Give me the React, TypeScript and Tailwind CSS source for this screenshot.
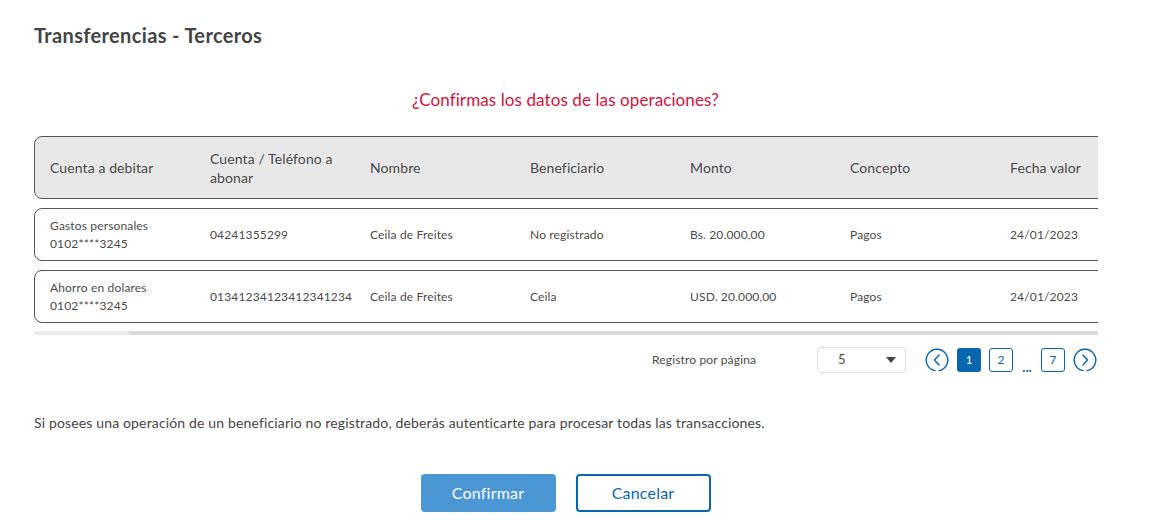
import React from "react";

const cols = ["Cuenta a debitar", "Cuenta / Teléfono a abonar", "Nombre", "Beneficiario", "Monto", "Concepto", "Fecha valor"];

const rows = [
  { a: ["Gastos personales", "0102****3245"], b: "04241355299", c: "Ceila de Freites", d: "No registrado", e: "Bs. 20.000,00", f: "Pagos", g: "24/01/2023" },
  { a: ["Ahorro en dolares", "0102****3245"], b: "01341234123412341234", c: "Ceila de Freites", d: "Ceila", e: "USD. 20.000,00", f: "Pagos", g: "24/01/2023" },
];

function Circle({ dir }: { dir: "l" | "r" }) {
  return (
    <svg width="24" height="24" viewBox="0 0 24 24" fill="none" stroke="#0a64ad" strokeWidth="1.4" strokeLinecap="round" strokeLinejoin="round">
      <path d="M14 22.6 A10.8 10.8 0 1 0 10 22.6" />
      {dir === "l" ? <path d="M14 7 L9.5 12 L14 17" /> : <path d="M10 7 L14.5 12 L10 17" />}
    </svg>
  );
}

export default function App() {
  return (
    <div className="w-[1162px] h-[529px] bg-white overflow-hidden text-[#4a4a4a]" style={{ fontFamily: "Lato, 'Noto Sans', sans-serif" }}>
      <div className="pl-[34px] pt-[23px]">
        <h1 className="text-[20px] font-bold text-[#444] leading-[24px] tracking-[0.35px]">Transferencias - Terceros</h1>
      </div>
      <p className="text-center text-[17px] text-[#d4123e] mt-[43px] leading-[20px] pr-[31px] tracking-[0.1px]">¿Confirmas los datos de las operaciones?</p>
      <div className="ml-[34px] w-[1064px] mt-[26px] overflow-hidden">
        <div className="w-[1200px]">
          <div className="h-[63px] bg-[#e8e8e8] border border-[#555] rounded-[8px] flex items-center text-[14px] text-[#4a4a4a] tracking-[0.1px]">
            {cols.map((c, i) => (
              <div key={i} className="w-[160px] pl-[15px] leading-[19px] pr-[10px] shrink-0">{c}</div>
            ))}
          </div>
          {rows.map((r, i) => (
            <div key={i} className="h-[53px] mt-[9px] border border-[#555] rounded-[8px] flex items-center text-[12px] text-[#4a4a4a] tracking-[0.15px]">
              <div className="w-[160px] pl-[15px] leading-[18px] shrink-0">
                <div>{r.a[0]}</div>
                <div>{r.a[1]}</div>
              </div>
              {[r.b, r.c, r.d, r.e, r.f, r.g].map((v, j) => (
                <div key={j} className="w-[160px] pl-[15px] shrink-0 whitespace-nowrap">{v}</div>
              ))}
            </div>
          ))}
        </div>
        <div className="mt-[8px] h-[4px] bg-[#d9d9d9] flex">
          <div className="w-[95px] h-full bg-[#ececec]" />
        </div>
      </div>
      <div className="flex items-center ml-[652px] mt-[12px] h-[26px]">
        <span className="text-[12px] text-[#4a4a4a] w-[165px] tracking-[0.15px]">Registro por página</span>
        <div className="w-[89px] h-[26px] border border-[#ddd] rounded-[4px] flex items-center justify-between pl-[20px] pr-[9px] text-[13px]">
          <span>5</span>
          <svg width="10" height="6" viewBox="0 0 10 6"><path d="M0 0 H10 L5 6 Z" fill="#444" /></svg>
        </div>
        <div className="ml-[19px] flex items-center gap-[8px]">
          <Circle dir="l" />
          <div className="w-[24px] h-[24px] rounded-[3px] bg-[#0766b0] text-white text-[12px] flex items-center justify-center">1</div>
          <div className="w-[24px] h-[24px] rounded-[3px] border border-[#0a64ad] text-[#0a64ad] text-[12px] flex items-center justify-center">2</div>
          <div className="w-[12px] h-[24px] flex items-end justify-center text-[#0a64ad] text-[13px] font-bold leading-[10px]">...</div>
          <div className="w-[24px] h-[24px] rounded-[3px] border border-[#0a64ad] text-[#0a64ad] text-[12px] flex items-center justify-center">7</div>
          <Circle dir="r" />
        </div>
      </div>
      <p className="ml-[34px] mt-[41px] text-[14px] text-[#444] leading-[18px] tracking-[0.15px]">Si posees una operación de un beneficiario no registrado, deberás autenticarte para procesar todas las transacciones.</p>
      <div className="flex justify-center gap-[20px] mt-[42px] pr-[31px]">
        <button className="w-[135px] h-[38px] rounded-[4px] bg-[#4b97d4] text-white text-[16px] tracking-[0.2px]">Confirmar</button>
        <button className="w-[135px] h-[38px] rounded-[4px] border-2 border-[#0766b0] text-[#0766b0] text-[16px] tracking-[0.2px]">Cancelar</button>
      </div>
    </div>
  );
}
